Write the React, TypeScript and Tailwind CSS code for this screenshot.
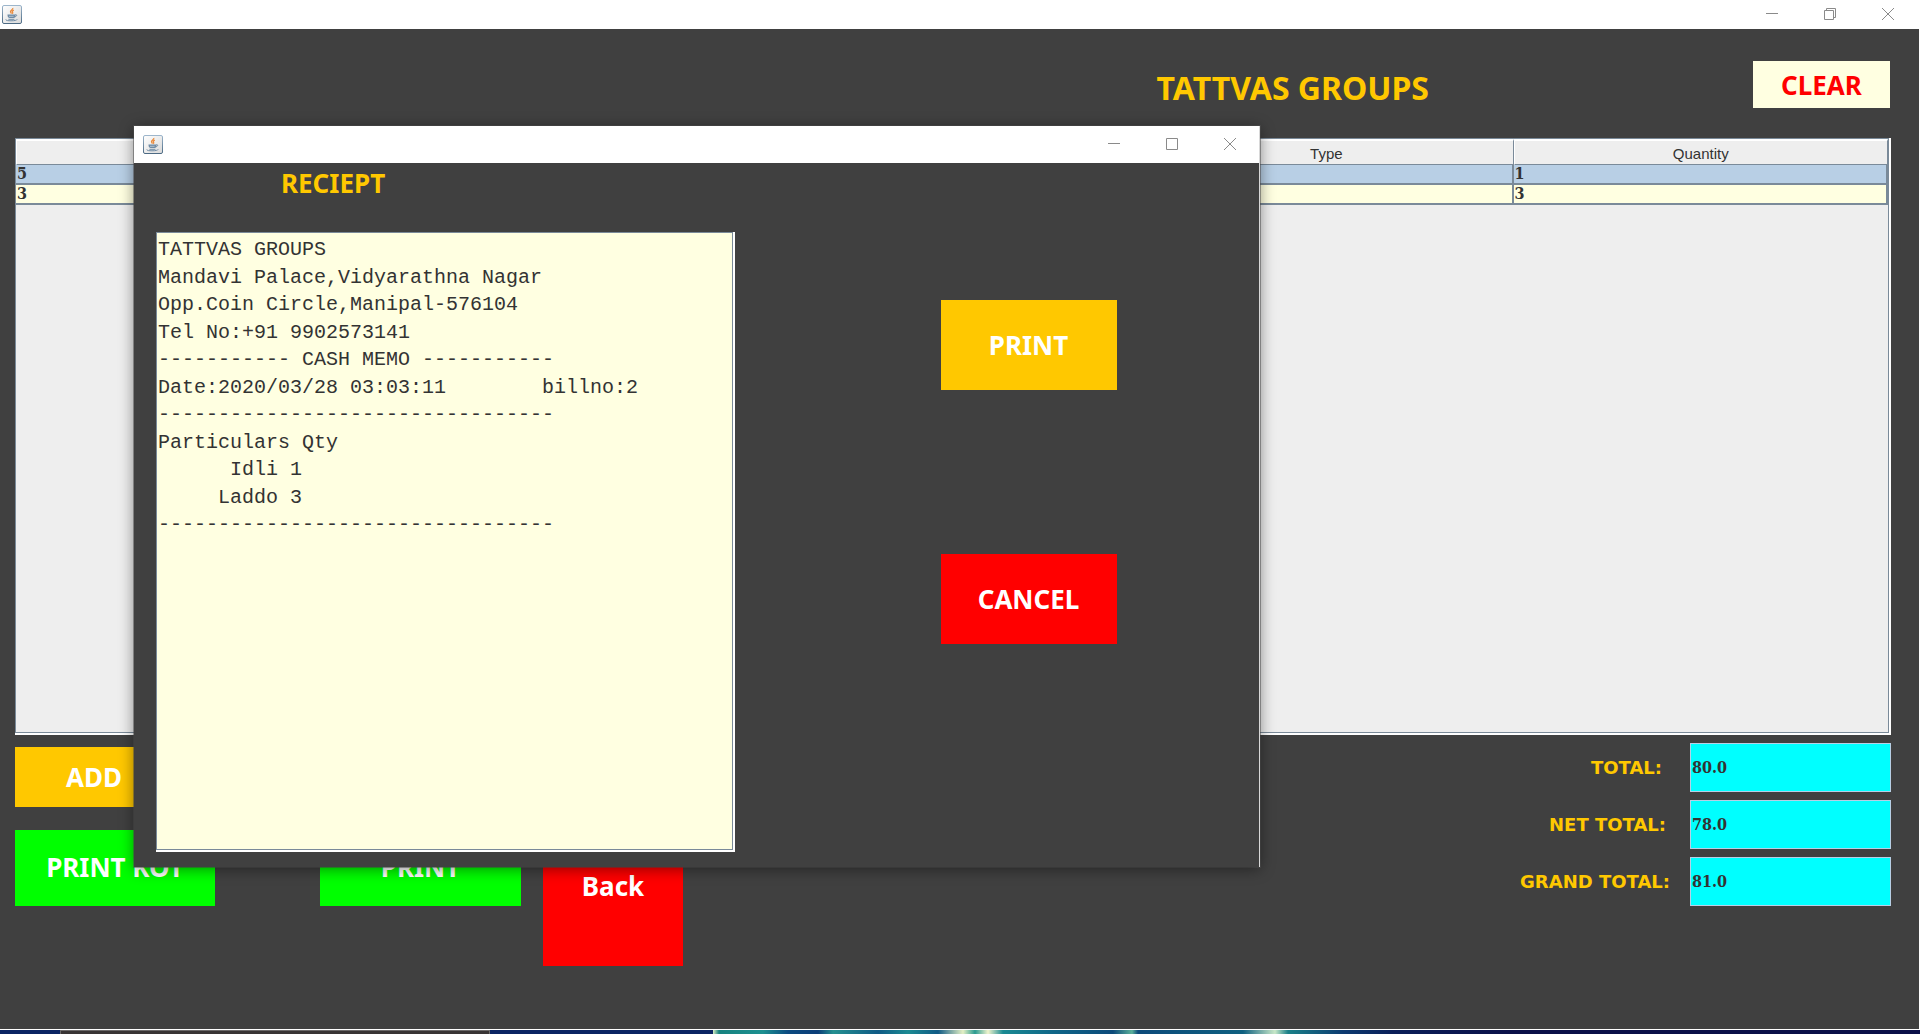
import React from "react";

const heading = 'font-["Noto_Sans",sans-serif] font-bold';
const serif = 'font-["DejaVu_Serif_Condensed","DejaVu_Serif",serif] font-bold';

function JavaIcon() {
  return (
    <svg width="20" height="19" viewBox="0 0 20 19" aria-hidden="true">
      <defs>
        <linearGradient id="cupEdge" x1="0" y1="0" x2="0" y2="1">
          <stop offset="0" stopColor="#9db6cc" />
          <stop offset="1" stopColor="#4c6a84" />
        </linearGradient>
        <linearGradient id="cupFace" x1="0" y1="0" x2="1" y2="1">
          <stop offset="0" stopColor="#ffffff" />
          <stop offset="1" stopColor="#d9d9d9" />
        </linearGradient>
      </defs>
      <rect x="0.5" y="0.5" width="19" height="18" rx="1.5" fill="url(#cupFace)" stroke="url(#cupEdge)" />
      <path d="M10.8 3c.5 1.6-2.6 2.2-2.3 3.7.1.7.8 1 .9 1.9M11.8 5.2c-1.6.8-1.9 1.4-1.2 2.2.4.5.1 1-.3 1.4" fill="none" stroke="#e98a3c" strokeWidth="1.3" />
      <path d="M5.5 9.5h8v1.2c0 1.4-.8 2.2-1.8 2.3H7.6c-1.2-.2-2-1-2-2.2z" fill="#6f8ba5" />
      <path d="M13.4 9.6c1.8-.3 1.8 1.8-.6 2.2M7 11.2h4.5" fill="none" stroke="#6f8ba5" />
      <path d="M7 11.3h4.6" fill="none" stroke="#c3cfda" strokeWidth="0.8" />
      <path d="M4 14.4c-.8 1 1.6 1.4 5 1.4s6-.5 6.2-1.4M6.4 14.3h6" fill="none" stroke="#6f8ba5" />
    </svg>
  );
}

function WindowControls({ restore = false }: { restore?: boolean }) {
  const button = "flex h-full w-[58px] items-center justify-center";
  return (
    <div className="flex h-full">
      <button aria-label="Minimize" className={button}>
        <svg width="12" height="12" fill="none" stroke="#8a8a8a"><path d="M0 5.5h12" /></svg>
      </button>
      <button aria-label={restore ? "Restore" : "Maximize"} className={button}>
        <svg width="12" height="12" fill="none" stroke="#8a8a8a">
          {restore ? <path d="M.5 2.5h9v9h-9zM2.5 2.5v-2h9v9h-2" /> : <path d="M.5.5h11v11H.5z" />}
        </svg>
      </button>
      <button aria-label="Close" className={button}>
        <svg width="12" height="12" fill="none" stroke="#8a8a8a"><path d="M0 0l12 12M12 0L0 12" /></svg>
      </button>
    </div>
  );
}

const headers = ["", "", "", "Type", "Quantity"];
const rows = [
  { cells: ["5", "", "", "", "1"], color: "bg-[#b8cfe5]" },
  { cells: ["3", "", "", "", "3"], color: "bg-[#ffffe1]" },
];

function OrderTable() {
  return (
    <div className="min-h-0 flex-1 border-r-2 border-b-2 border-white">
      <div className="h-full border border-[#7a8a99] bg-[#eeeeee]">
        <table className="w-full table-fixed border-separate border-spacing-0">
          <thead>
            <tr className="h-[26px]">
              {headers.map((h, i) => (
                <th
                  key={i}
                  className='border-t-2 border-r border-b border-l border-t-white border-r-[#7a8a99] border-b-[#7a8a99] border-l-white p-0 pt-0.5 text-center font-["Liberation_Sans",sans-serif] text-[15px] leading-5 font-normal text-[#333333]'
                >
                  {h}
                </th>
              ))}
            </tr>
          </thead>
          <tbody>
            {rows.map((row, r) => (
              <tr key={r} className={row.color}>
                {row.cells.map((cell, i) => (
                  <td key={i} className={`h-5 border-r-2 border-b-2 border-[#7a8a99] p-0 pl-px text-base leading-[18px] text-[#333333] ${serif}`}>
                    {cell}
                  </td>
                ))}
              </tr>
            ))}
          </tbody>
        </table>
      </div>
    </div>
  );
}

const totals = [
  { id: "total", label: "TOTAL:", value: "80.0", pad: "pr-7" },
  { id: "net", label: "NET TOTAL:", value: "78.0", pad: "pr-6" },
  { id: "grand", label: "GRAND TOTAL:", value: "81.0", pad: "pr-5" },
];

const receipt = `TATTVAS GROUPS
Mandavi Palace,Vidyarathna Nagar
Opp.Coin Circle,Manipal-576104
Tel No:+91 9902573141
----------- CASH MEMO -----------
Date:2020/03/28 03:03:11        billno:2
---------------------------------
Particulars Qty
      Idli 1
     Laddo 3
---------------------------------
`;

function ReceiptWindow() {
  return (
    <section
      aria-label="Receipt"
      className="absolute top-[126px] left-[134px] flex h-[741px] w-[1126px] flex-col border-r border-[#d8d8d8] bg-[#404040] shadow-[0_2px_14px_rgba(0,0,0,0.45),0_0_0_1px_rgba(90,90,90,0.5)]"
    >
      <div className="flex h-[37px] shrink-0 items-center justify-between bg-white pb-px pl-[9px]">
        <JavaIcon />
        <WindowControls />
      </div>
      <div className="flex flex-1 pb-[15px] pl-[22px]">
        <div className="flex w-[579px] flex-col">
          <h2 className={`flex h-[69px] items-start pt-[3px] pl-[125px] text-[26px] leading-[34px] text-[#ffc800] ${heading}`}>RECIEPT</h2>
          <div className="flex flex-1 border-r-2 border-b-2 border-white">
            <textarea
              aria-label="Receipt text"
              readOnly
              defaultValue={receipt}
              className='flex-1 resize-none overflow-hidden border border-[#7a8a99] bg-[#ffffe1] px-px py-[3px] font-["Liberation_Mono",monospace] text-xl leading-snug whitespace-pre text-[#333333] outline-none'
            />
          </div>
        </div>
        <div className="flex flex-1 flex-col items-center gap-[164px] pt-[137px] pr-[61px] pl-[124px]">
          <button className={`h-[90px] w-[176px] bg-[#ffc800] text-[26px] text-white ${heading}`}>PRINT</button>
          <button className={`h-[90px] w-[176px] bg-[#ff0000] text-[26px] text-white ${heading}`}>CANCEL</button>
        </div>
      </div>
    </section>
  );
}

function DesktopStrip() {
  return (
    <div className="flex h-1 shrink-0 bg-[#0a2463]">
      <div className="ml-[60px] w-[430px] border-x border-t border-[#6b6868] bg-[#383434]" />
      <div className="ml-[223px] flex-1 bg-[linear-gradient(90deg,#d8edc0_0,#17827f_6px,#1c9090_50px,#0b4a80_75px,#0b3d78_105px,#249090_120px,#0f5a85_165px,#1b8a92_195px,#0f5a85_225px,#e4f0c4_250px,#2a9a90_262px,#f0f4cc_275px,#1a8a92_290px,#0f6688_340px,#0c4a7a_400px,#5ab09a_419px,#0c4a7a_425px,#0f6080_530px,#c8e8c8_562px,#1a8088_575px,#0c3a70_630px,#0a1e58_680px,#0a1048_800px,#0a1048_100%)]" />
    </div>
  );
}

export default function App() {
  return (
    <main className="relative flex h-screen flex-col overflow-hidden bg-[#404040]">
      <div className="flex h-[29px] shrink-0 items-center justify-between bg-white pr-[3px] pb-px pl-0.5">
        <JavaIcon />
        <WindowControls restore />
      </div>
      <div className="flex min-h-0 flex-1 flex-col border-r border-b border-white pr-7 pl-[15px]">
        <header className="flex h-[109px] shrink-0 items-start justify-end gap-[324px] pt-8 pr-px">
          <h1 className={`pt-[3px] text-[32px] leading-[48px] text-[#ffc800] ${heading}`}>TATTVAS GROUPS</h1>
          <button className={`h-[47px] w-[137px] bg-[#ffffe1] pt-0.5 text-[26px] text-[#ff0000] ${heading}`}>CLEAR</button>
        </header>
        <OrderTable />
        <div className="flex h-[294px] shrink-0 items-start justify-between">
          <div className="flex pt-3">
            <div className="flex w-[305px] flex-col items-start gap-[23px]">
              <button className={`h-[60px] w-[158px] bg-[#ffc800] text-[26px] text-white ${heading}`}>ADD</button>
              <button className={`h-[76px] w-[200px] bg-[#00ff00] pb-0.5 text-[26px] text-white ${heading}`}>PRINT KOT</button>
            </div>
            <button className={`mt-[83px] h-[76px] w-[201px] bg-[#00ff00] pb-0.5 text-[26px] text-white ${heading}`}>PRINT</button>
            <button className={`mt-[59px] ml-[22px] h-40 w-[140px] bg-[#ff0000] text-[26px] text-white ${heading}`}>Back</button>
          </div>
          <div className="flex flex-col gap-2 pt-2">
            {totals.map((t) => (
              <div key={t.id} className="flex items-center justify-end">
                <label htmlFor={t.id} className={`${t.pad} font-["DejaVu_Sans",sans-serif] text-lg font-bold text-[#ffc800]`}>
                  {t.label}
                </label>
                <input
                  id={t.id}
                  defaultValue={t.value}
                  className={`h-[49px] w-[201px] border border-[#b8cfe5] bg-[#00ffff] px-px text-base text-[#333333] outline-none ${serif}`}
                />
              </div>
            ))}
          </div>
        </div>
      </div>
      <DesktopStrip />
      <ReceiptWindow />
    </main>
  );
}
